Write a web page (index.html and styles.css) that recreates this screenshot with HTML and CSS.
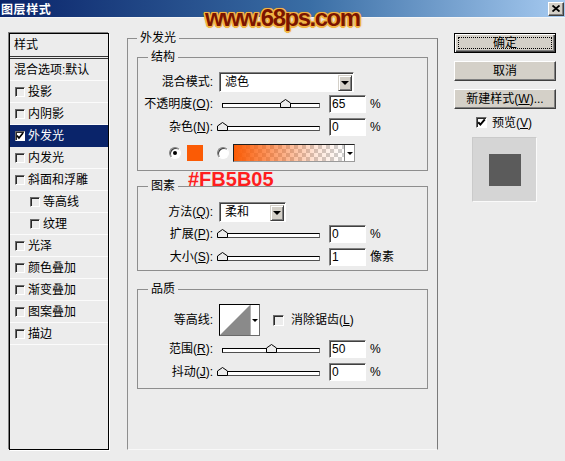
FILE: index.html
```html
<!DOCTYPE html>
<html>
<head>
<meta charset="utf-8">
<title>图层样式</title>
<link rel="stylesheet" href="styles.css">
</head>
<body>
<div class="titlebar">
  <span class="title">图层样式</span>
  <span class="close"><svg width="8" height="7" viewBox="0 0 8 7"><path d="M0.5 0.5 L7.5 6.5 M7.5 0.5 L0.5 6.5" stroke="#000" stroke-width="1.8"/></svg></span>
</div>
<div class="area">
  <div class="stylelist">
    <div class="list-head">样式</div>
    <div class="row plain">混合选项:默认</div>
    <div class="row"><span class="cb"></span>投影</div>
    <div class="row"><span class="cb"></span>内阴影</div>
    <div class="row sel"><span class="cb on"><svg width="8" height="8" viewBox="0 0 8 8"><path d="M1 3.6 L3 6 L7 1" stroke="#000" stroke-width="1.7" fill="none"/></svg></span>外发光</div>
    <div class="row"><span class="cb"></span>内发光</div>
    <div class="row"><span class="cb"></span>斜面和浮雕</div>
    <div class="row indent"><span class="cb"></span>等高线</div>
    <div class="row indent"><span class="cb"></span>纹理</div>
    <div class="row"><span class="cb"></span>光泽</div>
    <div class="row"><span class="cb"></span>颜色叠加</div>
    <div class="row"><span class="cb"></span>渐变叠加</div>
    <div class="row"><span class="cb"></span>图案叠加</div>
    <div class="row"><span class="cb"></span>描边</div>
  </div>

  <fieldset class="fx">
    <legend>外发光</legend>

    <fieldset class="grp g1">
      <legend>结构</legend>
      <div class="frow sel-row">
        <label>混合模式:</label>
        <div class="select w-blend"><span>滤色</span><span class="drop"><i class="tri"></i></span></div>
      </div>
      <div class="frow r-gap3">
        <label>不透明度(<u>O</u>):</label>
        <div class="slider"><div class="track"></div><svg class="thumb" style="left:61px" width="11" height="9" viewBox="0 0 11 9"><polygon points="0.5,8.5 0.5,4 5.5,0.5 10.5,4 10.5,8.5" fill="#ececec" stroke="#000"/></svg></div>
        <span class="num">65</span><span class="unit">%</span>
      </div>
      <div class="frow r-gap5">
        <label>杂色(<u>N</u>):</label>
        <div class="slider"><div class="track"></div><svg class="thumb" style="left:-2px" width="11" height="9" viewBox="0 0 11 9"><polygon points="0.5,8.5 0.5,4 5.5,0.5 10.5,4 10.5,8.5" fill="#ececec" stroke="#000"/></svg></div>
        <span class="num">0</span><span class="unit">%</span>
      </div>
      <div class="crow">
        <span class="radio on"></span>
        <span class="swatch"></span>
        <span class="radio r2"></span>
        <div class="grad"><span class="gfill"></span><span class="gdrop"><i class="tri small"></i></span></div>
      </div>
    </fieldset>

    <fieldset class="grp g2">
      <legend>图素</legend>
      <div class="frow sel-row m9">
        <label>方法(<u>Q</u>):</label>
        <div class="select w-method"><span>柔和</span><span class="drop"><i class="tri"></i></span></div>
      </div>
      <div class="frow r-gap3">
        <label>扩展(<u>P</u>):</label>
        <div class="slider"><div class="track"></div><svg class="thumb" style="left:-2px" width="11" height="9" viewBox="0 0 11 9"><polygon points="0.5,8.5 0.5,4 5.5,0.5 10.5,4 10.5,8.5" fill="#ececec" stroke="#000"/></svg></div>
        <span class="num">0</span><span class="unit">%</span>
      </div>
      <div class="frow r-gap5">
        <label>大小(<u>S</u>):</label>
        <div class="slider"><div class="track"></div><svg class="thumb" style="left:-2px" width="11" height="9" viewBox="0 0 11 9"><polygon points="0.5,8.5 0.5,4 5.5,0.5 10.5,4 10.5,8.5" fill="#ececec" stroke="#000"/></svg></div>
        <span class="num">1</span><span class="unit">像素</span>
      </div>
    </fieldset>

    <fieldset class="grp g3">
      <legend>品质</legend>
      <div class="frow tall">
        <label>等高线:</label>
        <div class="contour">
          <svg class="cshape" width="30" height="30" viewBox="0 0 30 30"><polygon points="0,30 30,0 30,30" fill="#8a8a8a"/></svg>
          <span class="cdrop"><i class="tri small"></i></span>
        </div>
        <span class="cb aa"></span><span class="aa-text">消除锯齿(<u>L</u>)</span>
      </div>
      <div class="frow r-gap4">
        <label>范围(<u>R</u>):</label>
        <div class="slider"><div class="track"></div><svg class="thumb" style="left:47px" width="11" height="9" viewBox="0 0 11 9"><polygon points="0.5,8.5 0.5,4 5.5,0.5 10.5,4 10.5,8.5" fill="#ececec" stroke="#000"/></svg></div>
        <span class="num">50</span><span class="unit">%</span>
      </div>
      <div class="frow r-gap5">
        <label>抖动(<u>J</u>):</label>
        <div class="slider"><div class="track"></div><svg class="thumb" style="left:-2px" width="11" height="9" viewBox="0 0 11 9"><polygon points="0.5,8.5 0.5,4 5.5,0.5 10.5,4 10.5,8.5" fill="#ececec" stroke="#000"/></svg></div>
        <span class="num">0</span><span class="unit">%</span>
      </div>
    </fieldset>
  </fieldset>

  <div class="side">
    <div class="btn default"><span class="focus">确定</span></div>
    <div class="btn">取消</div>
    <div class="btn">新建样式(<u>W</u>)...</div>
    <div class="pv">
      <span class="cb pvcb"><svg width="9" height="9" viewBox="0 0 9 9"><path d="M1.2 4.2 L3.4 6.6 L7.8 1.4" stroke="#000" stroke-width="2" fill="none"/></svg></span>
      <span class="pv-text">预览(<u>V</u>)</span>
    </div>
    <div class="preview"><span class="sq"></span></div>
  </div>
</div>

<div class="watermark">www.68ps.com</div>
<div class="annot">#FB5B05</div>
</body>
</html>
```
FILE: styles.css
```css
* { box-sizing: border-box; }
html, body { margin: 0; padding: 0; }
body {
  width: 565px;
  height: 461px;
  overflow: hidden;
  position: relative;
  background: #ececec;
  color: #000;
  font-family: "Liberation Sans", "Noto Sans CJK SC", sans-serif;
  font-size: 12px;
  line-height: 14px;
}
u { text-decoration: underline; text-underline-offset: 1px; }

/* title bar */
.titlebar {
  height: 18px;
  background: linear-gradient(to right, #0a246a 0%, #3a6ea5 55%, #a6caf0 100%);
  border-bottom: 1px solid #f6f6f6;
  display: flex;
  align-items: center;
  justify-content: space-between;
  padding: 0 1px 0 1px;
}
.title {
  color: #fff;
  font-weight: bold;
  font-size: 12px;
  letter-spacing: 0.6px;
  font-family: "Noto Sans CJK SC", sans-serif;
  line-height: 14px;
}
.close {
  width: 16px;
  height: 14px;
  background: #d4d0c8;
  border: 1px solid;
  border-color: #fff #404040 #404040 #fff;
  box-shadow: inset -1px -1px 0 #808080;
  display: flex;
  align-items: center;
  justify-content: center;
}

.area { display: flex; align-items: flex-start; }

/* left style list */
.stylelist {
  margin: 15px 0 0 9px;
  width: 100px;
  height: 417px;
  border: 1px solid #000;
  box-shadow: -1px -1px 0 #808080, 1px 1px 0 #fff;
  background: #ececec;
}
.list-head {
  height: 25px;
  padding-left: 4px;
  display: flex;
  align-items: center;
  border-bottom: 3px double #333;
}
.row {
  height: 22px;
  display: flex;
  align-items: center;
  padding-left: 5px;
  border-bottom: 1px solid #fbfbfb;
  white-space: nowrap;
}
.row.plain { padding-left: 4px; }
.row.indent { padding-left: 20px; }
.row.sel { background: #0a246a; color: #fff; border-bottom-color: #0a246a; }

.cb {
  flex: none;
  width: 10px;
  height: 10px;
  border: 1px solid;
  border-color: #6a6a6a #fff #fff #6a6a6a;
  box-shadow: inset 1px 1px 0 #2a2a2a;
  background: #ececec;
  margin-right: 3px;
  display: flex;
  align-items: center;
  justify-content: center;
}
.cb.on { background: #fff; }
.cb svg { display: block; }

/* fieldsets */
fieldset {
  margin: 0;
  padding: 0;
  min-width: 0;
  border: 1px solid #8e8e8e;
}
legend {
  padding: 0 3px;
  margin-left: 9px;
  font-size: 12px;
  line-height: 14px;
}
.fx {
  margin: 13px 0 0 18px;
  width: 311px;
  height: 419px;
  border-bottom-color: #f8f8f8;
  border-right-color: #7a7a7a;
}
.grp { margin: 5px 0 0 9px; width: 291px; }
.grp legend { margin-left: 10px; }
.g1 { height: 121px; }
.g2 { margin-top: 8px; height: 92px; }
.g3 { margin-top: 11px; height: 107px; }

.frow {
  display: flex;
  align-items: center;
  height: 18px;
  white-space: nowrap;
}
.frow label {
  flex: none;
  width: 75px;
  text-align: right;
}
.sel-row { height: 20px; margin-top: 8px; }
.sel-row.m9 { margin-top: 9px; }
.r-gap3 { margin-top: 3px; }
.r-gap4 { margin-top: 4px; }
.r-gap5 { margin-top: 5px; }
.frow.tall { height: 32px; margin-top: 8px; }

/* select */
.select {
  margin-left: 6px;
  height: 20px;
  background: #fff;
  border: 1px solid;
  border-color: #808080 #fff #fff #808080;
  box-shadow: inset 1px 1px 0 #404040;
  display: flex;
  align-items: center;
  padding-left: 5px;
}
.w-blend { width: 135px; }
.w-method { width: 67px; }
.drop {
  margin-left: auto;
  margin-right: 1px;
  width: 14px;
  height: 16px;
  margin-top: 1px;
  background: #d4d0c8;
  border: 1px solid;
  border-color: #d4d0c8 #404040 #404040 #d4d0c8;
  box-shadow: inset 1px 1px 0 #fff, inset -1px -1px 0 #808080;
  display: flex;
  align-items: center;
  justify-content: center;
}
.tri {
  display: block;
  width: 0;
  height: 0;
  border-left: 4px solid transparent;
  border-right: 4px solid transparent;
  border-top: 4px solid #000;
}
.tri.small {
  border-left-width: 3px;
  border-right-width: 3px;
  border-top-width: 3px;
}

/* slider */
.slider {
  flex: none;
  position: relative;
  margin-left: 6px;
  width: 105px;
  height: 18px;
  display: flex;
  align-items: flex-end;
  padding-bottom: 5px;
}
.track {
  margin-left: 3px;
  width: 98px;
  height: 5px;
  background: #fff;
  border: 1px solid #000;
  border-right-color: #707070;
  border-bottom-color: #505050;
}
.thumb {
  position: absolute;
  bottom: 5px;
  display: block;
}

/* number input */
.num {
  flex: none;
  margin-left: 5px;
  width: 37px;
  height: 18px;
  background: #fff;
  border: 1px solid;
  border-color: #808080 #fff #fff #808080;
  box-shadow: inset 1px 1px 0 #404040;
  padding-left: 2px;
  line-height: 16px;
  font-size: 12px;
}
.unit { margin-left: 4px; }

/* color row */
.crow {
  display: flex;
  align-items: center;
  height: 18px;
  margin-top: 8px;
  padding-left: 31px;
}
.radio {
  flex: none;
  width: 12px;
  height: 12px;
  border-radius: 50%;
  background: #fff;
  border: 1px solid;
  border-color: #808080 #fff #fff #808080;
  box-shadow: inset 1px 1px 0 #404040;
  display: flex;
  align-items: center;
  justify-content: center;
}
.radio.on::after {
  content: "";
  width: 4px;
  height: 4px;
  border-radius: 50%;
  background: #000;
}
.radio.r2 { margin-left: 14px; }
.swatch {
  flex: none;
  margin-left: 6px;
  width: 16px;
  height: 16px;
  background: #fb5b05;
}
.grad {
  flex: none;
  margin-left: 4px;
  width: 122px;
  height: 18px;
  border: 1px solid #202020;
  border-right-color: #9a9a9a;
  border-bottom-color: #9a9a9a;
  display: flex;
  background: #fff;
}
.gfill {
  flex: 1;
  background-image:
    linear-gradient(to right, #fb5b05 0%, rgba(251, 91, 5, 0.6) 35%, rgba(251, 91, 5, 0.15) 75%, rgba(251, 91, 5, 0) 100%),
    conic-gradient(#cfcfcf 25%, #fff 0 50%, #cfcfcf 0 75%, #fff 0);
  background-size: 100% 100%, 8px 8px;
}
.gdrop {
  flex: none;
  width: 10px;
  border-left: 1px solid #8a8a8a;
  background: #fff;
  display: flex;
  align-items: center;
  justify-content: center;
}

/* contour */
.contour {
  flex: none;
  margin-left: 6px;
  width: 41px;
  height: 32px;
  border: 1px solid #000;
  border-right-color: #6a6a6a;
  border-bottom-color: #6a6a6a;
  background: #fff;
  display: flex;
}
.cshape { display: block; flex: none; }
.cdrop {
  flex: 1;
  border-left: 1px solid #b0b0b0;
  display: flex;
  align-items: center;
  justify-content: center;
}
.cb.aa { width: 11px; height: 11px; margin-left: 13px; margin-right: 0; }
.aa-text { margin-left: 7px; }

/* right side */
.side {
  margin: 15px 0 0 16px;
  width: 102px;
  display: flex;
  flex-direction: column;
}
.btn {
  height: 20px;
  margin-bottom: 8px;
  background: #d4d0c8;
  border: 1px solid;
  border-color: #fff #404040 #404040 #fff;
  box-shadow: inset -1px -1px 0 #808080;
  display: flex;
  align-items: center;
  justify-content: center;
  font-size: 12px;
  white-space: nowrap;
}
.btn.default {
  border: 1px solid #000;
  box-shadow: inset 1px 1px 0 #fff, inset -1px -1px 0 #404040, inset -2px -2px 0 #808080;
  padding: 3px;
}
.focus {
  flex: 1;
  align-self: stretch;
  border: 1px dotted #000;
  display: flex;
  align-items: center;
  justify-content: center;
}
.pv {
  display: flex;
  align-items: center;
  height: 11px;
  margin-left: 22px;
}
.cb.pvcb { width: 11px; height: 11px; background: #fff; margin-right: 0; }
.pv-text { margin-left: 5px; }
.preview {
  margin: 9px 0 0 18px;
  width: 65px;
  height: 65px;
  background: #d5d5d5;
  border: 1px solid;
  border-color: #cacaca #fafafa #fafafa #cacaca;
  display: flex;
  align-items: center;
  justify-content: center;
}
.sq {
  width: 32px;
  height: 32px;
  background: #5b5b5b;
}

/* overlays */
.watermark {
  position: absolute;
  left: 205px;
  top: 6px;
  font-family: "Liberation Sans", sans-serif;
  font-weight: bold;
  font-size: 24px;
  line-height: 24px;
  letter-spacing: -1.5px;
  color: #7c1400;
  text-shadow:
    1.5px 0 0 #f2b544, -1.5px 0 0 #f2b544, 0 1.5px 0 #f2b544, 0 -1.5px 0 #f2b544,
    1.2px 1.2px 0 #f2b544, -1.2px 1.2px 0 #f2b544, 1.2px -1.2px 0 #f2b544, -1.2px -1.2px 0 #f2b544,
    0 0 3px #b85a10;
}
.annot {
  position: absolute;
  left: 188px;
  top: 169px;
  font-family: "Liberation Sans", sans-serif;
  font-weight: bold;
  font-size: 20px;
  line-height: 20px;
  color: #ff1e1e;
}
```
